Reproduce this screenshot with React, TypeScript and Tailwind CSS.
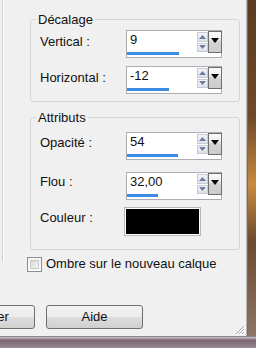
import React from 'react';

type SpinFieldProps = {
  value: string;
  bar: string;
};

// numeric field with spinner, dropdown and a progress bar underneath
const SpinField: React.FC<SpinFieldProps> = ({ value, bar }) => (
  <div className="w-[96px] h-[28px] border border-[#abadb3] bg-white flex flex-col">
    <div className="flex h-[21px]">
      <div className="flex-1 pl-[3px] pt-[1px] leading-[16px]">{value}</div>
      <div className="w-[11px] flex flex-col gap-[1px] pt-[1px]">
        <div className="h-[10px] border border-[#c5cad4] bg-[linear-gradient(180deg,#f3f5f9,#dde2ea)] flex items-center justify-center">
          <svg width="7" height="4" viewBox="0 0 7 4">
            <path d="M3.5 0L7 4H0z" fill="#6a7ba0" />
          </svg>
        </div>
        <div className="h-[10px] border border-[#c5cad4] bg-[linear-gradient(180deg,#f3f5f9,#dde2ea)] flex items-center justify-center">
          <svg width="7" height="4" viewBox="0 0 7 4">
            <path d="M0 0H7L3.5 4z" fill="#6a7ba0" />
          </svg>
        </div>
      </div>
      <div className="w-[14px] h-[22px] -mr-[1px] border border-[#6f6f6f] bg-[linear-gradient(180deg,#fafafa_0%,#f0f0f0_35%,#d2d2d2_50%,#cdcdcd_100%)] flex justify-center pt-[6px]">
        <svg width="8" height="5" viewBox="0 0 8 5">
          <path d="M0 0H8L4 5z" fill="#000" />
        </svg>
      </div>
    </div>
    <div className="h-[5px]">
      <div className={`h-[3px] bg-[#3d8de6] ${bar}`} />
    </div>
  </div>
);

const GroupBox: React.FC<{ title: string; className: string; children: React.ReactNode }> = ({ title, className, children }) => (
  <div className={`relative border border-[#d5d5d5] rounded-[3px] ${className}`}>
    <span className="absolute -top-[8px] left-[5px] px-[2px] bg-[#f0f0f0] leading-[16px]">{title}</span>
    {children}
  </div>
);

const App: React.FC = () => {
  return (
    <div className="w-[256px] h-[348px] overflow-hidden flex flex-col font-['Liberation_Sans',Arial,sans-serif] text-[13px] text-[#111]">
      <div className="flex h-[336px]">
        {/* dialog client area */}
        <div className="relative w-[246px] h-[336px] bg-[#f0f0f0] flex flex-col">
          <div className="flex">
            <div className="ml-[2px] w-[2px] h-[262px] border-l border-[#cfcfcf] border-r border-r-white" />
            <div className="ml-[26px] w-[210px] pt-[19px] flex flex-col">
              <GroupBox title="Décalage" className="h-[83px] pt-[10px] flex flex-col gap-[8px]">
                <div className="flex items-start h-[28px]">
                  <div className="w-[95px] pl-[9px] mt-[4px] leading-[16px]">Vertical :</div>
                  <SpinField value="9" bar="w-[52px]" />
                </div>
                <div className="flex items-start h-[28px]">
                  <div className="w-[95px] pl-[9px] mt-[4px] leading-[16px]">Horizontal :</div>
                  <SpinField value="-12" bar="w-[42px]" />
                </div>
              </GroupBox>

              <GroupBox title="Attributs" className="mt-[15px] h-[133px] pt-[14px] flex flex-col">
                <div className="flex items-start h-[28px]">
                  <div className="w-[95px] pl-[9px] mt-[3px] leading-[16px]">Opacité :</div>
                  <SpinField value="54" bar="w-[51px]" />
                </div>
                <div className="flex items-start h-[28px] mt-[12px]">
                  <div className="w-[95px] pl-[9px] mt-[2px] leading-[16px]">Flou :</div>
                  <SpinField value="32,00" bar="w-[31px]" />
                </div>
                <div className="flex items-start mt-[7px]">
                  <div className="w-[93px] pl-[9px] mt-[3px] leading-[16px]">Couleur :</div>
                  <div className="w-[77px] h-[29px] border border-[#b8b8b8] p-[1px] bg-white">
                    <div className="w-full h-full bg-black" />
                  </div>
                </div>
              </GroupBox>

              <div className="flex items-center -ml-[3px] mt-[6px] gap-[4px]">
                <div className="w-[15px] h-[15px] border border-[#8e8f8f] bg-[linear-gradient(180deg,#f4f4f4,#fcfcfc)] p-[2px]">
                  <div className="w-full h-full border border-[#c9c9c9] bg-[linear-gradient(135deg,#d8d8d8,#f6f6f6)]" />
                </div>
                <span className="leading-[16px]">Ombre sur le nouveau calque</span>
              </div>
            </div>
          </div>

          <div className="flex gap-[11px] -ml-[62px] mt-[33px]">
            <button className="w-[97px] h-[24px] shrink-0 border border-[#707070] rounded-[3px] bg-[linear-gradient(180deg,#f3f3f3_0%,#ebebeb_50%,#dddddd_51%,#d0d0d0_100%)] leading-[16px]">
              Annuler
            </button>
            <button className="w-[97px] h-[24px] shrink-0 border border-[#707070] rounded-[3px] bg-[linear-gradient(180deg,#f3f3f3_0%,#ebebeb_50%,#dddddd_51%,#d0d0d0_100%)] leading-[16px]">
              Aide
            </button>
          </div>

          {/* resize grip */}
          <svg className="absolute right-[1px] bottom-[1px]" width="11" height="11" viewBox="0 0 11 11">
            <path d="M10 2L2 10M10 5L5 10M10 8L8 10" stroke="#a5a5a5" strokeWidth="1" />
            <path d="M11 3L3 11M11 6L6 11M11 9L9 11" stroke="#ffffff" strokeWidth="1" />
          </svg>
        </div>
        <div className="w-[1px] bg-[#b8b8b8]" />
        <div className="w-[1px] bg-[#6e6e6e]" />
        {/* desktop behind the window */}
        <div className="w-[8px] bg-[linear-gradient(180deg,#5c3b20_0%,#6f4a2a_35%,#c88a3e_55%,#6b4a30_72%,#8e7566_100%)]" />
      </div>
      <div className="h-[1px] bg-[#8a8a8a]" />
      <div className="flex-1 bg-[linear-gradient(180deg,#cfc6cb_0%,#7a6671_30%,#9c8892_100%)]" />
    </div>
  );
};

export default App;
